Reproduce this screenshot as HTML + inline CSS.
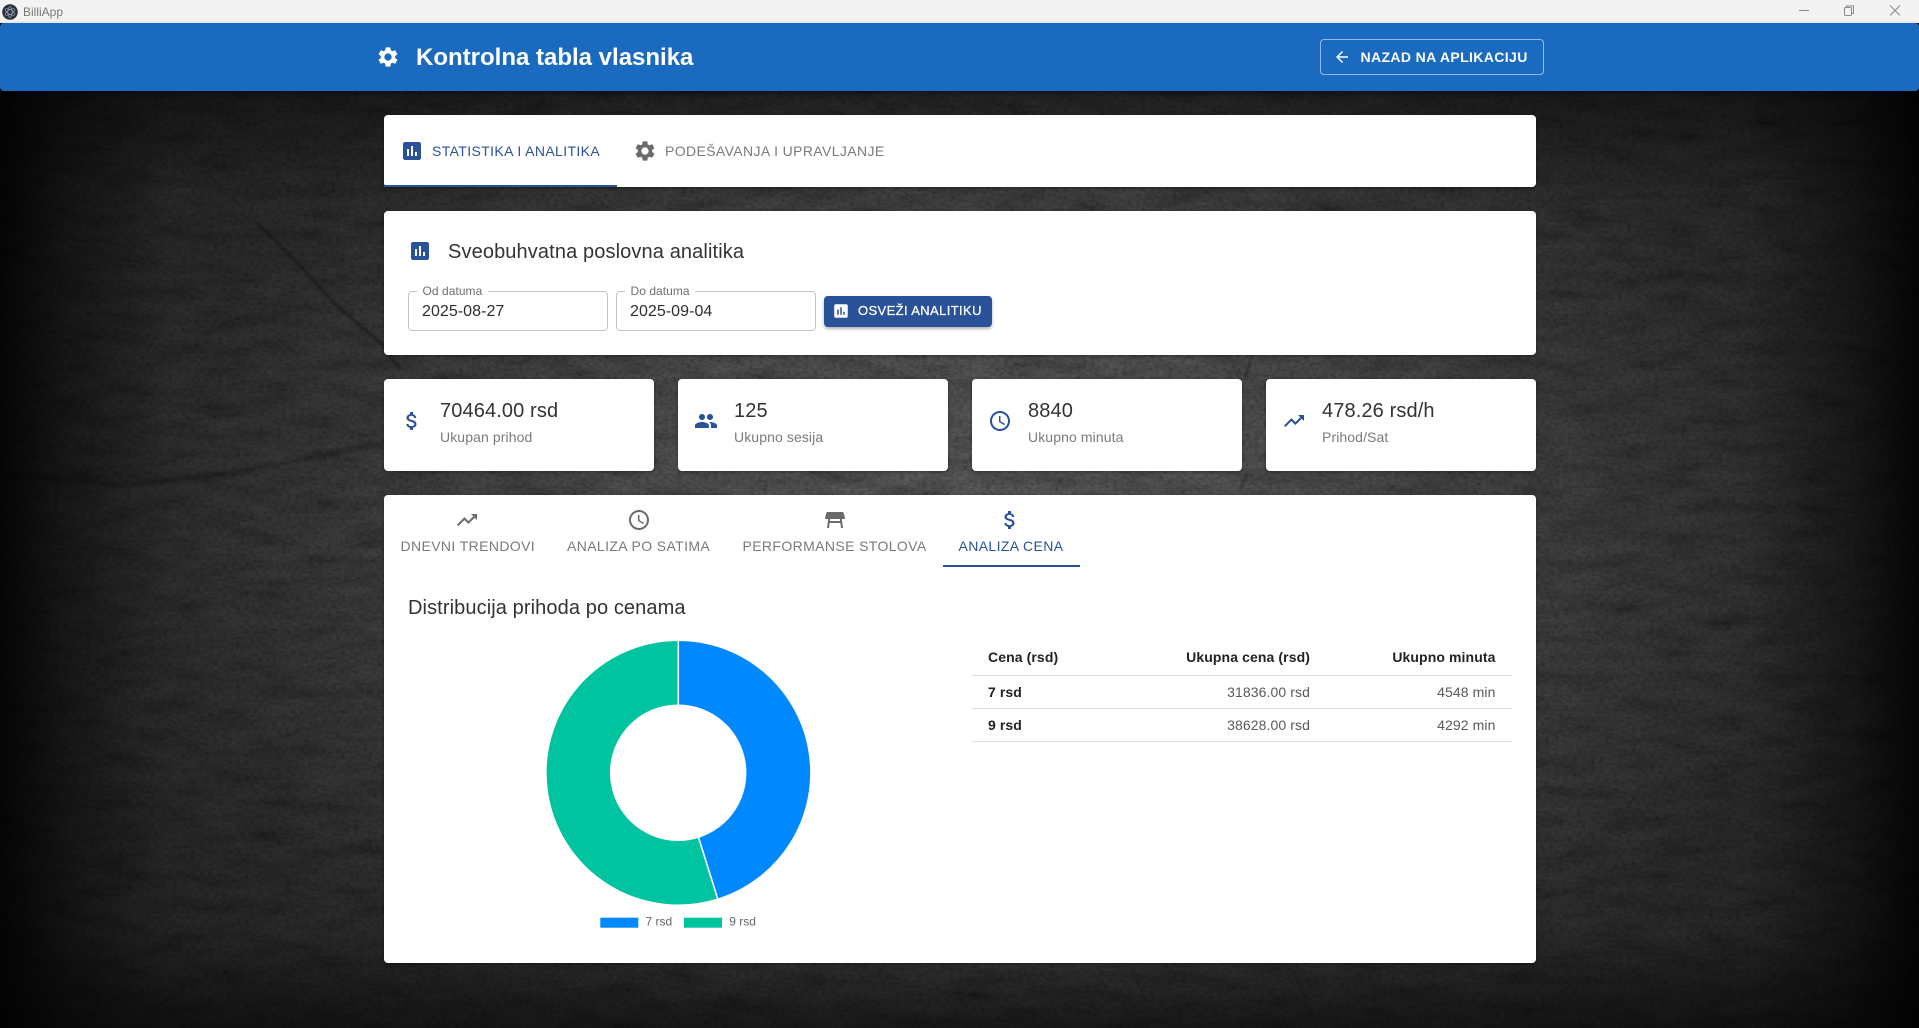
<!DOCTYPE html>
<html lang="sr">
<head>
<meta charset="utf-8">
<title>BilliApp</title>
<style>
html,body{margin:0;padding:0;width:1919px;height:1028px;overflow:hidden;background:#111;font-family:"Liberation Sans",Arial,sans-serif}
#bg{position:absolute;left:0;top:0;width:1919px;height:1028px}
.abs{position:absolute}
.t{position:absolute;white-space:nowrap;line-height:20px;height:20px}
.card{position:absolute;background:#fff;border-radius:4px;box-shadow:0 1px 3px rgba(0,0,0,.35)}
svg.i{position:absolute;width:24px;height:24px;display:block}
.blue{fill:#2a5298}
.grey{fill:#6b6b6b}
.tab{font-size:14px;letter-spacing:.38px;color:#7a7a7a}
.val{font-size:20px;color:#333;letter-spacing:.12px}
.lab{font-size:14px;color:#7b7b7b;letter-spacing:.1px}
.field{position:absolute;box-sizing:border-box;border:1px solid #c4c4c4;border-radius:4px;height:40px;top:291px;width:200px}
.gap{position:absolute;background:#fff;height:3px;top:290px}
.fl{font-size:12px;color:#6f6f6f;letter-spacing:.05px}
.fv{font-size:16px;color:#2e2e2e;letter-spacing:.05px}
.th{font-size:14px;font-weight:700;color:#222;letter-spacing:.1px}
.td{font-size:14px;color:#5a5a5a;letter-spacing:.1px}
.r{text-align:right}
.line{position:absolute;left:972px;width:540px;height:1px;background:#e0e0e0}
</style>
</head>
<body>
<svg id="bg" viewBox="0 0 1919 1028" xmlns="http://www.w3.org/2000/svg">
  <defs>
    <radialGradient id="rg" gradientUnits="userSpaceOnUse" cx="0" cy="0" r="1" gradientTransform="translate(980 540) scale(1150 720)">
      <stop offset="0" stop-color="#3c3c3c"/>
      <stop offset=".28" stop-color="#363636"/>
      <stop offset=".5" stop-color="#2a2a2a"/>
      <stop offset=".72" stop-color="#1e1e1e"/>
      <stop offset="1" stop-color="#151515"/>
    </radialGradient>
    <linearGradient id="edgeL" x1="0" x2="1" y1="0" y2="0">
      <stop offset="0" stop-color="#000" stop-opacity=".85"/>
      <stop offset=".4" stop-color="#000" stop-opacity=".4"/>
      <stop offset="1" stop-color="#000" stop-opacity="0"/>
    </linearGradient>
    <linearGradient id="edgeR" x1="1" x2="0" y1="0" y2="0">
      <stop offset="0" stop-color="#000" stop-opacity=".85"/>
      <stop offset=".4" stop-color="#000" stop-opacity=".4"/>
      <stop offset="1" stop-color="#000" stop-opacity="0"/>
    </linearGradient>
    <linearGradient id="edgeB" x1="0" x2="0" y1="1" y2="0">
      <stop offset="0" stop-color="#000" stop-opacity=".45"/>
      <stop offset="1" stop-color="#000" stop-opacity="0"/>
    </linearGradient>
    <linearGradient id="edgeT" x1="0" x2="0" y1="0" y2="1">
      <stop offset="0" stop-color="#000" stop-opacity=".35"/>
      <stop offset="1" stop-color="#000" stop-opacity="0"/>
    </linearGradient>
    <filter id="n1" x="0" y="0" width="100%" height="100%">
      <feTurbulence type="fractalNoise" baseFrequency="0.02 0.07" numOctaves="4" seed="7"/>
      <feColorMatrix values="1.2 0 0 0 -.1  1.2 0 0 0 -.1  1.2 0 0 0 -.1  0 0 0 0 1"/>
    </filter>
    <filter id="n2" x="0" y="0" width="100%" height="100%">
      <feTurbulence type="fractalNoise" baseFrequency="0.22 0.35" numOctaves="3" seed="3"/>
      <feColorMatrix values="1.2 0 0 0 -.1  1.2 0 0 0 -.1  1.2 0 0 0 -.1  0 0 0 0 1"/>
    </filter>
    <filter id="b1"><feGaussianBlur stdDeviation="1.5"/></filter>
    <filter id="b2"><feGaussianBlur stdDeviation="1"/></filter>
  </defs>
  <rect width="1919" height="1028" fill="url(#rg)"/>
  <rect width="1919" height="1028" filter="url(#n1)" opacity=".3" style="mix-blend-mode:overlay"/>
  <rect width="1919" height="1028" filter="url(#n2)" opacity=".3" style="mix-blend-mode:overlay"/>
  <g fill="none" stroke="#000" stroke-linecap="round">
    <path d="M0 473L123 485L233 473L383 443" stroke-width="5" opacity=".2" filter="url(#b1)"/>
    <path d="M80 445L123 478M140 426L270 410L383 405" stroke-width="1.2" opacity=".16" filter="url(#b2)"/>
    <path d="M163 134L253 217" stroke-width=".8" opacity=".22" filter="url(#b2)"/>
    <path d="M257 223L300 265L333 302L383 345L400 369" stroke-width="3" opacity=".3" filter="url(#b2)"/>
    <path d="M190 974L180 992L150 1010" stroke-width="1.5" opacity=".25" filter="url(#b2)"/>
    <path d="M1248 471L1240 490M1252 355L1245 379" stroke-width="1.5" opacity=".4" filter="url(#b2)"/>
    <path d="M1293 965L1305 1000L1318 1030M1130 965L1145 1000" stroke-width="1.2" opacity=".25" filter="url(#b2)"/>
  </g>
  <rect width="170" height="1028" fill="url(#edgeL)"/>
  <rect x="1749" width="170" height="1028" fill="url(#edgeR)"/>
  <rect y="91" width="1919" height="110" fill="url(#edgeT)"/>
  <rect y="930" width="1919" height="98" fill="url(#edgeB)"/>
</svg>

<!-- window title bar -->
<div class="abs" style="left:0;top:0;width:1919px;height:23px;background:#f3f3f3"></div>
<svg class="abs" style="left:2px;top:4px" width="16" height="16" viewBox="0 0 16 16">
  <circle cx="8" cy="8" r="7.8" fill="#2b2f3b"/>
  <g fill="none" stroke="#8fa4b0" stroke-width=".7">
    <ellipse cx="8" cy="8" rx="5.4" ry="2.2" transform="rotate(30 8 8)"/>
    <ellipse cx="8" cy="8" rx="5.4" ry="2.2" transform="rotate(90 8 8)"/>
    <ellipse cx="8" cy="8" rx="5.4" ry="2.2" transform="rotate(150 8 8)"/>
  </g>
</svg>
<div class="t" style="left:23px;top:2px;font-size:12px;color:#777">BilliApp</div>
<svg class="abs" style="left:1799px;top:5px" width="106" height="14" viewBox="0 0 106 14" fill="none" stroke="#8a8a8a" stroke-width="1">
  <path d="M0 5.5H10"/>
  <rect x="45.5" y="2.5" width="7" height="8" rx="1"/>
  <path d="M47.5 2.5V1H54.5V8.5H52.5"/>
  <path d="M91 0.5L101 10.5M101 0.5L91 10.5"/>
</svg>

<!-- header -->
<div class="abs" style="left:0;top:23px;width:1919px;height:68px;background:#1a6bc0;border-radius:4px;box-shadow:0 2px 4px rgba(0,0,0,.4)"></div>
<svg class="i" viewBox="0 0 24 24" style="left:376px;top:45px" fill="#fff"><path d="M19.14 12.94c.04-.3.06-.61.06-.94 0-.32-.02-.64-.07-.94l2.03-1.58c.18-.14.23-.41.12-.61l-1.92-3.32c-.12-.22-.37-.29-.59-.22l-2.39.96c-.5-.38-1.03-.7-1.62-.94l-.36-2.54c-.04-.24-.24-.41-.48-.41h-3.84c-.24 0-.43.17-.47.41l-.36 2.54c-.59.24-1.13.57-1.62.94l-2.39-.96c-.22-.08-.47 0-.59.22L2.74 8.87c-.12.21-.08.47.12.61l2.03 1.58c-.05.3-.09.63-.09.94s.02.64.07.94l-2.03 1.58c-.18.14-.23.41-.12.61l1.92 3.32c.12.22.37.29.59.22l2.39-.96c.5.38 1.03.7 1.62.94l.36 2.54c.05.24.24.41.48.41h3.84c.24 0 .44-.17.47-.41l.36-2.54c.59-.24 1.13-.56 1.62-.94l2.39.96c.22.08.47 0 .59-.22l1.92-3.32c.12-.22.07-.47-.12-.61l-2.01-1.58zM12 15.6c-1.98 0-3.6-1.62-3.6-3.6s1.62-3.6 3.6-3.6 3.6 1.62 3.6 3.6-1.62 3.6-3.6 3.6z"/></svg>
<div class="t" style="left:416px;top:48px;font-size:24px;font-weight:700;color:#fff">Kontrolna tabla vlasnika</div>
<div class="abs" style="left:1320px;top:39px;width:224px;height:36px;box-sizing:border-box;border:1px solid #8fbdf0;border-radius:4px"></div>
<svg class="abs" style="left:1333px;top:48px" width="18" height="18" viewBox="0 0 24 24" fill="#fff"><path d="M20 11H7.83l5.59-5.59L12 4l-8 8 8 8 1.41-1.41L7.83 13H20v-2z"/></svg>
<div class="t" style="left:1360.5px;top:47px;font-size:14px;font-weight:700;color:#fff;letter-spacing:.38px">NAZAD NA APLIKACIJU</div>

<!-- main tabs card -->
<div class="card" style="left:384px;top:115px;width:1152px;height:72px"></div>
<div class="abs" style="left:384px;top:185px;width:233px;height:2px;background:#2a5298"></div>
<svg class="i blue" viewBox="0 0 24 24" style="left:400px;top:139px"><path d="M19 3H5c-1.1 0-2 .9-2 2v14c0 1.1.9 2 2 2h14c1.1 0 2-.9 2-2V5c0-1.1-.9-2-2-2zM9 17H7v-7h2v7zm4 0h-2V7h2v10zm4 0h-2v-4h2v4z"/></svg>
<div class="t tab" style="left:432px;top:141px;color:#2a5298">STATISTIKA I ANALITIKA</div>
<svg class="i grey" viewBox="0 0 24 24" style="left:633px;top:139px"><path d="M19.14 12.94c.04-.3.06-.61.06-.94 0-.32-.02-.64-.07-.94l2.03-1.58c.18-.14.23-.41.12-.61l-1.92-3.32c-.12-.22-.37-.29-.59-.22l-2.39.96c-.5-.38-1.03-.7-1.62-.94l-.36-2.54c-.04-.24-.24-.41-.48-.41h-3.84c-.24 0-.43.17-.47.41l-.36 2.54c-.59.24-1.13.57-1.62.94l-2.39-.96c-.22-.08-.47 0-.59.22L2.74 8.87c-.12.21-.08.47.12.61l2.03 1.58c-.05.3-.09.63-.09.94s.02.64.07.94l-2.03 1.58c-.18.14-.23.41-.12.61l1.92 3.32c.12.22.37.29.59.22l2.39-.96c.5.38 1.03.7 1.62.94l.36 2.54c.05.24.24.41.48.41h3.84c.24 0 .44-.17.47-.41l.36-2.54c.59-.24 1.13-.56 1.62-.94l2.39.96c.22.08.47 0 .59-.22l1.92-3.32c.12-.22.07-.47-.12-.61l-2.01-1.58zM12 15.6c-1.98 0-3.6-1.62-3.6-3.6s1.62-3.6 3.6-3.6 3.6 1.62 3.6 3.6-1.62 3.6-3.6 3.6z"/></svg>
<div class="t tab" style="left:665px;top:141px">PODEŠAVANJA I UPRAVLJANJE</div>

<!-- analytics header card -->
<div class="card" style="left:384px;top:211px;width:1152px;height:144px"></div>
<svg class="i blue" viewBox="0 0 24 24" style="left:408px;top:239px"><path d="M19 3H5c-1.1 0-2 .9-2 2v14c0 1.1.9 2 2 2h14c1.1 0 2-.9 2-2V5c0-1.1-.9-2-2-2zM9 17H7v-7h2v7zm4 0h-2V7h2v10zm4 0h-2v-4h2v4z"/></svg>
<div class="t" style="left:448px;top:242px;font-size:20px;color:#333;letter-spacing:.12px">Sveobuhvatna poslovna analitika</div>

<div class="field" style="left:408px"></div>
<div class="gap" style="left:417px;width:71px"></div>
<div class="t fl" style="left:422.5px;top:281px">Od datuma</div>
<div class="t fv" style="left:422px;top:302px">2025-08-27</div>

<div class="field" style="left:616px"></div>
<div class="gap" style="left:625px;width:70px"></div>
<div class="t fl" style="left:630.5px;top:281px">Do datuma</div>
<div class="t fv" style="left:630px;top:302px">2025-09-04</div>

<div class="abs" style="left:824px;top:296px;width:168px;height:31px;background:#2a5298;border-radius:4px;box-shadow:0 2px 3px rgba(0,0,0,.3)"></div>
<svg class="abs" style="left:832px;top:302px" width="18" height="18" viewBox="0 0 24 24" fill="#fff"><path d="M19 3H5c-1.1 0-2 .9-2 2v14c0 1.1.9 2 2 2h14c1.1 0 2-.9 2-2V5c0-1.1-.9-2-2-2zM9 17H7v-7h2v7zm4 0h-2V7h2v10zm4 0h-2v-4h2v4z"/></svg>
<div class="t" style="left:858px;top:301px;font-size:13px;color:#fff;letter-spacing:.38px;-webkit-text-stroke:.25px #fff">OSVEŽI ANALITIKU</div>

<!-- stat cards -->
<div class="card" style="left:384px;top:379px;width:270px;height:92px"></div>
<svg class="i blue" viewBox="0 0 24 24" style="left:400px;top:409px"><path d="M11.8 10.9c-2.27-.59-3-1.2-3-2.15 0-1.09 1.01-1.85 2.7-1.85 1.78 0 2.44.85 2.5 2.1h2.21c-.07-1.72-1.12-3.3-3.21-3.81V3h-3v2.16c-1.94.42-3.5 1.68-3.5 3.61 0 2.31 1.91 3.46 4.7 4.13 2.5.6 3 1.48 3 2.41 0 .69-.49 1.79-2.7 1.79-2.06 0-2.87-.92-2.98-2.1h-2.2c.12 2.19 1.76 3.42 3.68 3.83V21h3v-2.15c1.95-.37 3.5-1.5 3.5-3.55 0-2.84-2.43-3.81-4.7-4.4z"/></svg>
<div class="t val" style="left:440px;top:401px">70464.00 rsd</div>
<div class="t lab" style="left:440px;top:427px">Ukupan prihod</div>

<div class="card" style="left:678px;top:379px;width:270px;height:92px"></div>
<svg class="i blue" viewBox="0 0 24 24" style="left:694px;top:409px"><path d="M16 11c1.66 0 2.99-1.34 2.99-3S17.66 5 16 5c-1.66 0-3 1.34-3 3s1.34 3 3 3zm-8 0c1.66 0 2.99-1.34 2.99-3S9.66 5 8 5C6.34 5 5 6.34 5 8s1.34 3 3 3zm0 2c-2.33 0-7 1.17-7 3.5V19h14v-2.5c0-2.33-4.67-3.5-7-3.5zm8 0c-.29 0-.62.02-.97.05 1.16.84 1.97 1.97 1.97 3.45V19h6v-2.5c0-2.33-4.67-3.5-7-3.5z"/></svg>
<div class="t val" style="left:734px;top:401px">125</div>
<div class="t lab" style="left:734px;top:427px">Ukupno sesija</div>

<div class="card" style="left:972px;top:379px;width:270px;height:92px"></div>
<svg class="i blue" viewBox="0 0 24 24" style="left:988px;top:409px"><path d="M11.99 2C6.47 2 2 6.48 2 12s4.47 10 9.99 10C17.52 22 22 17.52 22 12S17.52 2 11.99 2zM12 20c-4.42 0-8-3.58-8-8s3.58-8 8-8 8 3.58 8 8-3.58 8-8 8z"/><path d="M12.5 7H11v6l5.25 3.15.75-1.23-4.5-2.67z"/></svg>
<div class="t val" style="left:1028px;top:401px">8840</div>
<div class="t lab" style="left:1028px;top:427px">Ukupno minuta</div>

<div class="card" style="left:1266px;top:379px;width:270px;height:92px"></div>
<svg class="i blue" viewBox="0 0 24 24" style="left:1282px;top:409px"><path d="M16 6l2.29 2.29-4.88 4.88-4-4L2 16.59 3.41 18l6-6 4 4 6.3-6.29L22 12V6z"/></svg>
<div class="t val" style="left:1322px;top:401px">478.26 rsd/h</div>
<div class="t lab" style="left:1322px;top:427px">Prihod/Sat</div>

<!-- main analytics card -->
<div class="card" style="left:384px;top:495px;width:1152px;height:468px"></div>

<svg class="i grey" viewBox="0 0 24 24" style="left:455px;top:508px"><path d="M16 6l2.29 2.29-4.88 4.88-4-4L2 16.59 3.41 18l6-6 4 4 6.3-6.29L22 12V6z"/></svg>
<div class="t tab" style="left:400.5px;top:536px">DNEVNI TRENDOVI</div>
<svg class="i grey" viewBox="0 0 24 24" style="left:627px;top:508px"><path d="M11.99 2C6.47 2 2 6.48 2 12s4.47 10 9.99 10C17.52 22 22 17.52 22 12S17.52 2 11.99 2zM12 20c-4.42 0-8-3.58-8-8s3.58-8 8-8 8 3.58 8 8-3.58 8-8 8z"/><path d="M12.5 7H11v6l5.25 3.15.75-1.23-4.5-2.67z"/></svg>
<div class="t tab" style="left:567px;top:536px">ANALIZA PO SATIMA</div>
<svg class="i grey" viewBox="0 0 24 24" style="left:822.5px;top:508px"><path d="M21.96 9.73l-1.43-5c-.12-.43-.51-.73-.96-.73H4.43c-.45 0-.84.3-.96.73l-1.43 5c-.18.63.3 1.27.96 1.27h2.2L4 20h2l.67-5h10.67l.66 5h2l-1.2-9H21c.66 0 1.14-.64.96-1.27zM6.93 13l.27-2h9.6l.27 2H6.93z"/></svg>
<div class="t tab" style="left:742.5px;top:536px">PERFORMANSE STOLOVA</div>
<svg class="i blue" viewBox="0 0 24 24" style="left:998px;top:508px"><path d="M11.8 10.9c-2.27-.59-3-1.2-3-2.15 0-1.09 1.01-1.85 2.7-1.85 1.78 0 2.44.85 2.5 2.1h2.21c-.07-1.72-1.12-3.3-3.21-3.81V3h-3v2.16c-1.94.42-3.5 1.68-3.5 3.61 0 2.31 1.91 3.46 4.7 4.13 2.5.6 3 1.48 3 2.41 0 .69-.49 1.79-2.7 1.79-2.06 0-2.87-.92-2.98-2.1h-2.2c.12 2.19 1.76 3.42 3.68 3.83V21h3v-2.15c1.95-.37 3.5-1.5 3.5-3.55 0-2.84-2.43-3.81-4.7-4.4z"/></svg>
<div class="t tab" style="left:958.5px;top:536px;color:#2a5298">ANALIZA CENA</div>
<div class="abs" style="left:943px;top:565px;width:137px;height:2px;background:#2a5298"></div>

<div class="t" style="left:408px;top:598px;font-size:20px;color:#333;letter-spacing:.1px">Distribucija prihoda po cenama</div>

<!-- donut -->
<svg class="abs" style="left:540px;top:630px" width="280" height="310" viewBox="540 630 280 310">
  <path d="M678.3 640.2A132.5 132.5 0 0 1 717.8 899.2L698.4 837.1A67.5 67.5 0 0 0 678.3 705.2Z" fill="#0088FE" stroke="#fff" stroke-width="1.5"/>
  <path d="M717.8 899.2A132.5 132.5 0 1 1 678.3 640.2L678.3 705.2A67.5 67.5 0 1 0 698.4 837.1Z" fill="#00C49F" stroke="#fff" stroke-width="1.5"/>
  <rect x="600.3" y="917.7" width="38" height="10" fill="#0088FE"/>
  <rect x="684" y="917.7" width="38" height="10" fill="#00C49F"/>
  <text x="645.5" y="925.5" font-family="Liberation Sans, Arial, sans-serif" font-size="12" fill="#666">7 rsd</text>
  <text x="729.2" y="925.5" font-family="Liberation Sans, Arial, sans-serif" font-size="12" fill="#666">9 rsd</text>
</svg>

<!-- table -->
<div class="t th" style="left:988px;top:647px">Cena (rsd)</div>
<div class="t th r" style="right:609px;top:647px">Ukupna cena (rsd)</div>
<div class="t th r" style="right:423.5px;top:647px">Ukupno minuta</div>
<div class="line" style="top:675px"></div>
<div class="t th" style="left:988px;top:682px">7 rsd</div>
<div class="t td r" style="right:609px;top:682px">31836.00 rsd</div>
<div class="t td r" style="right:423.5px;top:682px">4548 min</div>
<div class="line" style="top:708px"></div>
<div class="t th" style="left:988px;top:715px">9 rsd</div>
<div class="t td r" style="right:609px;top:715px">38628.00 rsd</div>
<div class="t td r" style="right:423.5px;top:715px">4292 min</div>
<div class="line" style="top:741px"></div>
</body>
</html>
